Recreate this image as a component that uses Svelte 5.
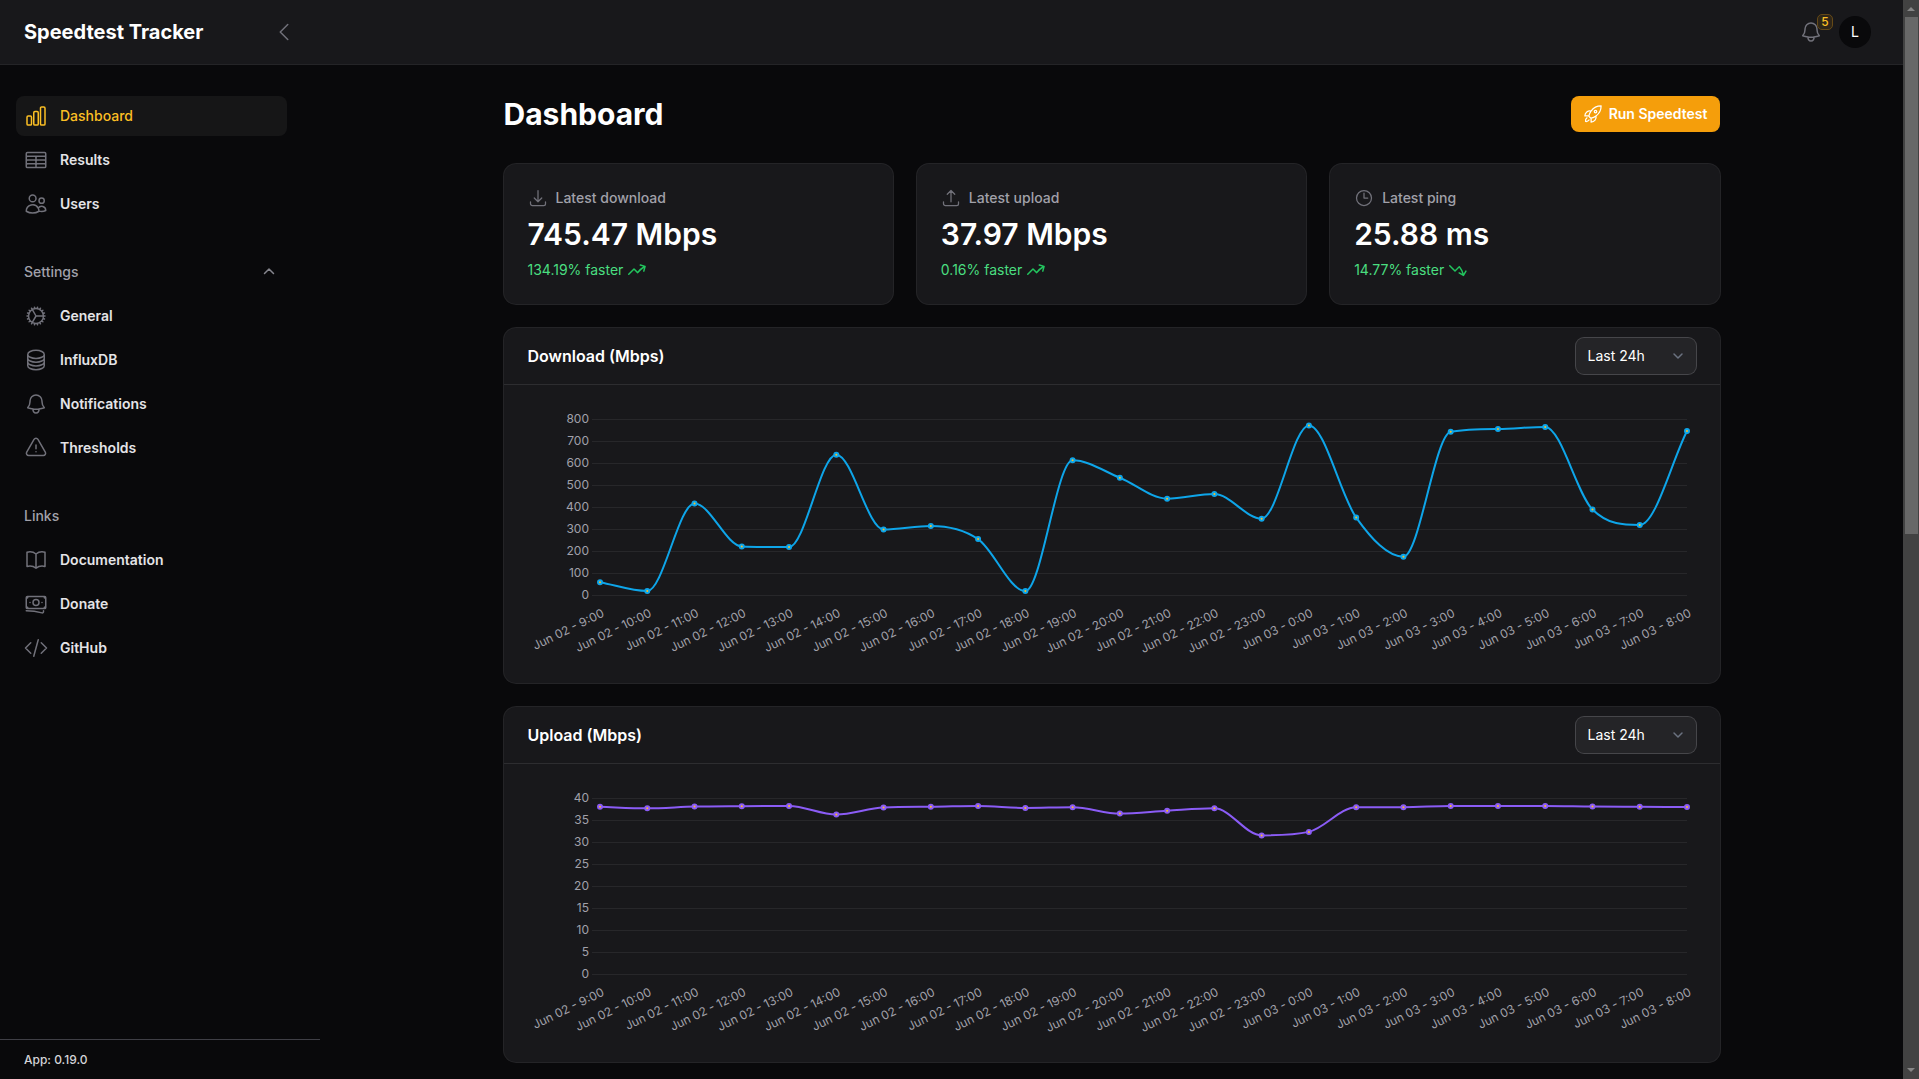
<script>
  const icons = {
    chart: 'M3 13.125C3 12.504 3.504 12 4.125 12h2.25c.621 0 1.125.504 1.125 1.125v6.75C7.5 20.496 6.996 21 6.375 21h-2.25A1.125 1.125 0 013 19.875v-6.75zM9.75 8.625c0-.621.504-1.125 1.125-1.125h2.25c.621 0 1.125.504 1.125 1.125v11.25c0 .621-.504 1.125-1.125 1.125h-2.25a1.125 1.125 0 01-1.125-1.125V8.625zM16.5 4.125c0-.621.504-1.125 1.125-1.125h2.25C20.496 3 21 3.504 21 4.125v15.75c0 .621-.504 1.125-1.125 1.125h-2.25a1.125 1.125 0 01-1.125-1.125V4.125z',
    table: 'M3.375 19.5h17.25m-17.25 0a1.125 1.125 0 01-1.125-1.125M3.375 19.5h7.5c.621 0 1.125-.504 1.125-1.125m-9.75 0V5.625m0 12.75v-1.5c0-.621.504-1.125 1.125-1.125m18.375 2.625V5.625m0 12.75c0 .621-.504 1.125-1.125 1.125m1.125-1.125v-1.5c0-.621-.504-1.125-1.125-1.125m0 3.75h-7.5A1.125 1.125 0 0112 18.375m9.75-12.75c0-.621-.504-1.125-1.125-1.125H3.375c-.621 0-1.125.504-1.125 1.125m19.5 0v1.5c0 .621-.504 1.125-1.125 1.125M2.25 5.625v1.5c0 .621.504 1.125 1.125 1.125m0 0h17.25m-17.25 0h7.5c.621 0 1.125.504 1.125 1.125M3.375 8.25c-.621 0-1.125.504-1.125 1.125v1.5c0 .621.504 1.125 1.125 1.125m17.25-3.75h-7.5c-.621 0-1.125.504-1.125 1.125m8.625-1.125c.621 0 1.125.504 1.125 1.125v1.5c0 .621-.504 1.125-1.125 1.125m-17.25 0h7.5m-7.5 0c-.621 0-1.125.504-1.125 1.125v1.5c0 .621.504 1.125 1.125 1.125M12 10.875v-1.5m0 1.5c0 .621-.504 1.125-1.125 1.125M12 10.875c0 .621.504 1.125 1.125 1.125m-2.25 0c.621 0 1.125.504 1.125 1.125M13.125 12h7.5m-7.5 0c-.621 0-1.125.504-1.125 1.125M20.625 12c.621 0 1.125.504 1.125 1.125v1.5c0 .621-.504 1.125-1.125 1.125m-17.25 0h7.5M12 14.625v-1.5m0 1.5c0 .621-.504 1.125-1.125 1.125M12 14.625c0 .621.504 1.125 1.125 1.125m-2.25 0c.621 0 1.125.504 1.125 1.125m0 1.5v-1.5m0 0c0-.621.504-1.125 1.125-1.125m0 0h7.5',
    users: 'M15 19.128a9.38 9.38 0 002.625.372 9.337 9.337 0 004.121-.952 4.125 4.125 0 00-7.533-2.493M15 19.128v-.003c0-1.113-.285-2.16-.786-3.07M15 19.128v.106A12.318 12.318 0 018.624 21c-2.331 0-4.512-.645-6.374-1.766l-.001-.109a6.375 6.375 0 0111.964-3.07M12 6.375a3.375 3.375 0 11-6.75 0 3.375 3.375 0 016.75 0zm8.25 2.25a2.625 2.625 0 11-5.25 0 2.625 2.625 0 015.25 0z',
    cog: 'M4.5 12a7.5 7.5 0 0015 0m-15 0a7.5 7.5 0 1115 0m-15 0H3m16.5 0H21m-1.5 0H12m-8.457 3.077l1.41-.513m14.095-5.13l1.41-.513M5.106 17.785l1.15-.964m11.49-9.642l1.149-.964M7.501 19.795l.75-1.3m7.5-12.99l.75-1.3m-6.063 16.658l.26-1.477m2.605-14.772l.26-1.477m0 17.726l-.26-1.477M10.698 4.614l-.26-1.477M16.5 19.794l-.75-1.299M7.5 4.205L12 12m6.894 5.785l-1.149-.964M6.256 7.178l-1.15-.964m15.352 8.864l-1.41-.513M4.954 9.435l-1.41-.514M12.002 12l-3.75 6.495',
    stack: 'M20.25 6.375c0 2.278-3.694 4.125-8.25 4.125S3.75 8.653 3.75 6.375m16.5 0c0-2.278-3.694-4.125-8.25-4.125S3.75 4.097 3.75 6.375m16.5 0v11.25c0 2.278-3.694 4.125-8.25 4.125s-8.25-1.847-8.25-4.125V6.375m16.5 0v3.75m-16.5-3.75v3.75m16.5 0v3.75C20.25 16.153 16.556 18 12 18s-8.25-1.847-8.25-4.125v-3.75m16.5 0c0 2.278-3.694 4.125-8.25 4.125s-8.25-1.847-8.25-4.125',
    bell: 'M14.857 17.082a23.848 23.848 0 005.454-1.31A8.967 8.967 0 0118 9.75v-.7V9A6 6 0 006 9v.75a8.967 8.967 0 01-2.312 6.022c1.733.64 3.56 1.085 5.455 1.31m5.714 0a24.255 24.255 0 01-5.714 0m5.714 0a3 3 0 11-5.714 0',
    warning: 'M12 9v3.75m-9.303 3.376c-.866 1.5.217 3.374 1.948 3.374h14.71c1.73 0 2.813-1.874 1.948-3.374L13.949 3.378c-.866-1.5-3.032-1.5-3.898 0L2.697 16.126zM12 15.75h.007v.008H12v-.008z',
    book: 'M12 6.042A8.967 8.967 0 006 3.75c-1.052 0-2.062.18-3 .512v14.25A8.987 8.987 0 016 18c2.305 0 4.408.867 6 2.292m0-14.25a8.966 8.966 0 016-2.292c1.052 0 2.062.18 3 .512v14.25A8.987 8.987 0 0018 18a8.967 8.967 0 00-6 2.292m0-14.25v14.25',
    banknotes: 'M2.25 18.75a60.07 60.07 0 0115.797 2.101c.727.198 1.453-.342 1.453-1.096V18.75M3.75 4.5v.75A.75.75 0 013 6h-.75m0 0v-.375c0-.621.504-1.125 1.125-1.125H20.25M2.25 6v9m18-10.5v.75c0 .414.336.75.75.75h.75m-1.5-1.5h.375c.621 0 1.125.504 1.125 1.125v9.75c0 .621-.504 1.125-1.125 1.125h-.375m1.5-1.5H21a.75.75 0 00-.75.75v.75m0 0H3.75m0 0h-.375a1.125 1.125 0 01-1.125-1.125V15m1.5 1.5v-.75A.75.75 0 003 15h-.75M15 10.5a3 3 0 11-6 0 3 3 0 016 0zm3 0h.008v.008H18V10.5zm-12 0h.008v.008H6V10.5z',
    code: 'M17.25 6.75L22.5 12l-5.25 5.25m-10.5 0L1.5 12l5.25-5.25m7.5-3l-4.5 16.5',
    rocket: 'M15.59 14.37a6 6 0 01-5.84 7.38v-4.8m5.84-2.58a14.98 14.98 0 006.16-12.12A14.98 14.98 0 009.631 8.41m5.96 5.96a14.926 14.926 0 01-5.841 2.58m-.119-8.54a6 6 0 00-7.381 5.84h4.8m2.581-5.84a14.927 14.927 0 00-2.58 5.84m2.699 2.7c-.103.021-.207.041-.311.06a15.09 15.09 0 01-2.448-2.448 14.9 14.9 0 01.06-.312m-2.24 2.39a4.493 4.493 0 00-1.757 4.306 4.493 4.493 0 004.306-1.758M16.5 9a1.5 1.5 0 11-3 0 1.5 1.5 0 013 0z',
    download: 'M3 16.5v2.25A2.25 2.25 0 005.25 21h13.5A2.25 2.25 0 0021 18.75V16.5M16.5 12L12 16.5m0 0L7.5 12m4.5 4.5V3',
    upload: 'M3 16.5v2.25A2.25 2.25 0 005.25 21h13.5A2.25 2.25 0 0021 18.75V16.5m-13.5-9L12 3m0 0l4.5 4.5M12 3v13.5',
    clock: 'M12 6v6h4.5m4.5 0a9 9 0 11-18 0 9 9 0 0118 0z',
    left: 'M15.75 19.5L8.25 12l7.5-7.5',
  };
  const trend = {
    up: 'M12.577 4.878a.75.75 0 01.919-.53l4.78 1.281a.75.75 0 01.531.919l-1.281 4.78a.75.75 0 01-1.449-.387l.81-3.022a19.407 19.407 0 00-5.594 5.203.75.75 0 01-1.139.093L7 10.06l-4.72 4.72a.75.75 0 01-1.06-1.061l5.25-5.25a.75.75 0 011.06 0l3.074 3.073a20.923 20.923 0 015.545-4.931l-3.042-.815a.75.75 0 01-.53-.919z',
    down: 'M1.22 5.222a.75.75 0 011.06 0L7 9.942l3.768-3.769a.75.75 0 011.113.058 20.908 20.908 0 013.813 7.254l1.574-2.727a.75.75 0 011.3.75l-2.475 4.286a.75.75 0 01-1.025.275l-4.287-2.475a.75.75 0 01.75-1.3l2.71 1.565a19.422 19.422 0 00-3.013-6.024L7.53 11.533a.75.75 0 01-1.06 0l-5.25-5.25a.75.75 0 010-1.06z',
  };

  const groups = [
    { items: [
      { text: 'Dashboard', icon: 'chart', active: true },
      { text: 'Results', icon: 'table' },
      { text: 'Users', icon: 'users' },
    ] },
    { title: 'Settings', collapsible: true, items: [
      { text: 'General', icon: 'cog' },
      { text: 'InfluxDB', icon: 'stack' },
      { text: 'Notifications', icon: 'bell' },
      { text: 'Thresholds', icon: 'warning' },
    ] },
    { title: 'Links', items: [
      { text: 'Documentation', icon: 'book' },
      { text: 'Donate', icon: 'banknotes' },
      { text: 'GitHub', icon: 'code' },
    ] },
  ];

  const stats = [
    { label: 'Latest download', icon: 'download', value: '745.47 Mbps', change: '134.19% faster', trend: 'up' },
    { label: 'Latest upload', icon: 'upload', value: '37.97 Mbps', change: '0.16% faster', trend: 'up' },
    { label: 'Latest ping', icon: 'clock', value: '25.88 ms', change: '14.77% faster', trend: 'down' },
  ];

  const hours = Array.from({ length: 24 }, (_, i) => {
    const h = 9 + i;
    return h < 24 ? `Jun 02 - ${h}:00` : `Jun 03 - ${h - 24}:00`;
  });

  const charts = [
    {
      id: 'download', title: 'Download (Mbps)', max: 800, step: 100, color: '#0ea5e9',
      data: [58, 18, 416, 221, 218, 638, 298, 314, 254, 18, 612, 533, 438, 459, 347, 771, 352, 174, 742, 755, 764, 389, 318, 745.47],
    },
    {
      id: 'upload', title: 'Upload (Mbps)', max: 40, step: 5, color: '#8b5cf6',
      data: [38, 37.65, 38.05, 38.15, 38.2, 36.25, 37.85, 38, 38.2, 37.75, 37.9, 36.45, 37.1, 37.65, 31.5, 32.3, 37.9, 37.9, 38.2, 38.2, 38.2, 38.05, 38, 37.97],
    },
  ];

  let chartWidth = $state(1168);
  const plot = { left: 72, right: 9, top: 10, height: 176 };

  function xAt(i, width) {
    return plot.left + (i * (width - plot.left - plot.right)) / (hours.length - 1);
  }
  function yAt(v, max) {
    return plot.top + plot.height * (1 - v / max);
  }
  function ticks(chart) {
    return Array.from({ length: chart.max / chart.step + 1 }, (_, i) => i * chart.step);
  }

  // Monotone cubic interpolation: tangents vanish at local extremes.
  function curve(chart, width) {
    const xs = chart.data.map((_, i) => xAt(i, width));
    const ys = chart.data.map((v) => yAt(v, chart.max));
    const n = xs.length;
    const d = [];
    for (let i = 0; i < n - 1; i++) d.push((ys[i + 1] - ys[i]) / (xs[i + 1] - xs[i]));
    const m = xs.map((_, i) => {
      if (i === 0) return d[0];
      if (i === n - 1) return d[n - 2];
      return d[i - 1] * d[i] <= 0 ? 0 : (d[i - 1] + d[i]) / 2;
    });
    for (let i = 0; i < n - 1; i++) {
      if (d[i] === 0) { m[i] = m[i + 1] = 0; continue; }
      const a = m[i] / d[i];
      const b = m[i + 1] / d[i];
      const s = a * a + b * b;
      if (s > 9) {
        const t = 3 / Math.sqrt(s);
        m[i] = t * a * d[i];
        m[i + 1] = t * b * d[i];
      }
    }
    let path = `M${xs[0]} ${ys[0]}`;
    for (let i = 0; i < n - 1; i++) {
      const h = (xs[i + 1] - xs[i]) / 3;
      path += `C${xs[i] + h} ${ys[i] + m[i] * h} ${xs[i + 1] - h} ${ys[i + 1] - m[i + 1] * h} ${xs[i + 1]} ${ys[i + 1]}`;
    }
    return path;
  }
</script>

{#snippet outline(name)}
  <svg class="icon" viewBox="0 0 24 24" aria-hidden="true"><path d={icons[name]} /></svg>
{/snippet}

<div class="shell">
  <div class="page">
    <header class="topbar">
      <div class="brand">
        <a class="brand-name" href="#dashboard">Speedtest Tracker</a>
        <button class="plain" type="button" aria-label="Collapse sidebar">{@render outline('left')}</button>
      </div>
      <div class="account">
        <button class="plain bell" type="button" aria-label="Notifications, 5 unread">
          {@render outline('bell')}
          <span class="badge">5</span>
        </button>
        <button class="avatar" type="button" aria-label="User menu">L</button>
      </div>
    </header>

    <div class="body">
      <aside class="sidebar">
        <nav class="nav" aria-label="Main">
          {#each groups as group}
            <div class="group">
              {#if group.collapsible}
                <button class="group-title" type="button" aria-expanded="true">
                  <span>{group.title}</span>
                  <svg class="small-icon muted" viewBox="0 0 20 20" aria-hidden="true"><path d="M5.5 11.5L10 7l4.5 4.5" /></svg>
                </button>
              {:else if group.title}
                <h2 class="group-title">{group.title}</h2>
              {/if}
              {#each group.items as item}
                <a class="item" class:active={item.active} href={`#${item.text.toLowerCase()}`} aria-current={item.active ? 'page' : undefined}>
                  {@render outline(item.icon)}
                  <span>{item.text}</span>
                </a>
              {/each}
            </div>
          {/each}
        </nav>
        <footer class="version">App: 0.19.0</footer>
      </aside>

      <main class="main">
        <div class="content">
          <div class="heading">
            <h1>Dashboard</h1>
            <button class="run" type="button">{@render outline('rocket')}<span>Run Speedtest</span></button>
          </div>

          <div class="widgets">
            <div class="stats">
              {#each stats as stat}
                <section class="card stat">
                  <div class="stat-label">{@render outline(stat.icon)}<span>{stat.label}</span></div>
                  <div class="stat-value">{stat.value}</div>
                  <div class="stat-change">
                    <span>{stat.change}</span>
                    <svg class="trend" viewBox="0 0 20 20" aria-hidden="true"><path d={trend[stat.trend]} /></svg>
                  </div>
                </section>
              {/each}
            </div>

            {#each charts as chart}
              <section class="card">
                <div class="card-head">
                  <h3>{chart.title}</h3>
                  <div class="select">
                    <select aria-label={`${chart.title} period`}>
                      <option>Last 24h</option>
                      <option>Last week</option>
                      <option>Last month</option>
                    </select>
                    <svg class="small-icon" viewBox="0 0 20 20" aria-hidden="true"><path d="M6 8l4 4 4-4" /></svg>
                  </div>
                </div>
                <div class="card-body">
                  <div class="chart" bind:clientWidth={chartWidth}>
                    <svg width={chartWidth} height="250" role="img" aria-label={chart.title}>
                      {#each ticks(chart) as tick}
                        <line class="grid" x1={plot.left - 8} x2={chartWidth - plot.right} y1={yAt(tick, chart.max)} y2={yAt(tick, chart.max)} />
                        <text class="tick" x={plot.left - 11} y={yAt(tick, chart.max) + 4} text-anchor="end">{tick}</text>
                      {/each}
                      {#each hours as hour, i}
                        <text class="tick" text-anchor="end" transform={`translate(${xAt(i, chartWidth) + 5} 207) rotate(-26)`}>{hour}</text>
                      {/each}
                      <path class="line" d={curve(chart, chartWidth)} stroke={chart.color} />
                      {#each chart.data as value, i}
                        <circle class="point" cx={xAt(i, chartWidth)} cy={yAt(value, chart.max)} r="2" stroke={chart.color} />
                      {/each}
                    </svg>
                  </div>
                </div>
              </section>
            {/each}
          </div>
        </div>
      </main>
    </div>
  </div>

  <div class="scrollbar" aria-hidden="true">
    <svg viewBox="0 0 16 17"><path d="M4 11l4-4 4 4z" /></svg>
    <div class="track"><div class="thumb"></div></div>
    <svg viewBox="0 0 16 17"><path d="M4 6l4 4 4-4z" /></svg>
  </div>
</div>

<style>
  :global(body) {
    background: #09090b;
  }
  .shell {
    display: flex;
    height: 100vh;
    font-family: Inter, "Liberation Sans", sans-serif;
    font-size: 14px;
    line-height: 20px;
    color: #fff;
    color-scheme: dark;
  }
  .shell *,
  .shell {
    box-sizing: border-box;
  }
  h1, h2, h3 {
    margin: 0;
  }
  button {
    font: inherit;
    color: inherit;
    border: 0;
    padding: 0;
    background: none;
    cursor: pointer;
  }
  a {
    color: inherit;
    text-decoration: none;
  }
  .page {
    flex: 1;
    min-width: 0;
    display: flex;
    flex-direction: column;
  }
  .topbar {
    height: 65px;
    flex: none;
    display: flex;
    justify-content: space-between;
    align-items: center;
    padding-right: 32px;
    background: #18181b;
    border-bottom: 1px solid #242427;
  }
  .brand {
    width: 320px;
    padding: 0 24px;
    display: flex;
    align-items: center;
    justify-content: space-between;
  }
  .brand-name {
    font-size: 20px;
    font-weight: 700;
  }
  .icon {
    display: block;
    flex: none;
    width: 24px;
    height: 24px;
    fill: none;
    stroke: currentColor;
    stroke-width: 1.5;
    stroke-linecap: round;
    stroke-linejoin: round;
  }
  .small-icon {
    display: block;
    width: 20px;
    height: 20px;
    fill: none;
    stroke: currentColor;
    stroke-width: 1.5;
    stroke-linecap: round;
    stroke-linejoin: round;
  }
  .muted {
    color: #85858d;
  }
  .plain {
    color: #71717a;
  }
  .account {
    display: flex;
    align-items: center;
    gap: 16px;
  }
  .bell {
    position: relative;
  }
  .badge {
    position: absolute;
    left: 18px;
    top: -6px;
    width: 16px;
    height: 16px;
    border: 1px solid #654917;
    border-radius: 5px;
    background: #2e2619;
    color: #fbbf24;
    font-size: 12px;
    line-height: 14px;
    font-weight: 500;
    text-align: center;
  }
  .avatar {
    width: 32px;
    height: 32px;
    border-radius: 50%;
    background: #09090b;
    text-align: center;
  }
  .body {
    flex: 1;
    min-height: 0;
    display: flex;
  }
  .sidebar {
    width: 320px;
    flex: none;
    display: flex;
    flex-direction: column;
  }
  .nav {
    flex: 1;
    min-height: 0;
    overflow: hidden;
    display: flex;
    flex-direction: column;
    gap: 28px;
    padding: 31px 33px 31px 16px;
  }
  .group {
    display: flex;
    flex-direction: column;
    gap: 4px;
  }
  .group-title {
    display: flex;
    align-items: center;
    justify-content: space-between;
    padding: 10px 8px;
    font-size: 14px;
    line-height: 20px;
    font-weight: 500;
    color: #a1a1aa;
  }
  .item {
    display: flex;
    align-items: center;
    gap: 12px;
    padding: 8px;
    border-radius: 8px;
    font-weight: 600;
    color: #e4e4e7;
  }
  .item .icon {
    color: #71717a;
  }
  .active {
    background: #161617;
    font-weight: 500;
  }
  .active,
  .active .icon {
    color: #fbbf24;
  }
  .version {
    border-top: 1px solid #3f3f46;
    padding: 12px 24px 11px;
    font-size: 12px;
    line-height: 16px;
    font-weight: 500;
    color: #d4d4d8;
  }
  .main {
    flex: 1;
    min-width: 0;
    overflow-y: auto;
    scrollbar-width: none;
  }
  .content {
    max-width: 1280px;
    margin: 0 auto;
    padding: 31px 32px 32px;
    display: flex;
    flex-direction: column;
    gap: 32px;
  }
  .heading {
    display: flex;
    justify-content: space-between;
    align-items: center;
  }
  h1 {
    font-size: 30px;
    line-height: 36px;
    font-weight: 700;
  }
  .run {
    display: flex;
    align-items: center;
    gap: 6px;
    padding: 8px 12px;
    border-radius: 8px;
    background: #f59e0b;
    font-weight: 600;
  }
  .run .icon,
  .stat-label .icon {
    width: 20px;
    height: 20px;
  }
  .widgets {
    display: flex;
    flex-direction: column;
    gap: 24px;
  }
  .stats {
    display: grid;
    grid-template-columns: repeat(3, 1fr);
    gap: 24px;
  }
  .card {
    border-radius: 12px;
    background: #18181b;
    box-shadow: 0 0 0 1px #242427;
  }
  .stat {
    padding: 24px;
    display: flex;
    flex-direction: column;
    gap: 8px;
  }
  .stat-label {
    display: flex;
    align-items: center;
    gap: 8px;
    font-weight: 500;
    color: #a1a1aa;
  }
  .stat-label .icon {
    color: #71717a;
  }
  .stat-value {
    font-size: 30px;
    line-height: 36px;
    font-weight: 600;
  }
  .stat-change {
    display: flex;
    align-items: center;
    gap: 4px;
    color: #4ade80;
  }
  .trend {
    width: 20px;
    height: 20px;
    fill: #22c55e;
  }
  .card-head {
    height: 56px;
    padding: 0 24px;
    display: flex;
    align-items: center;
    justify-content: space-between;
  }
  h3 {
    font-size: 16px;
    line-height: 24px;
    font-weight: 600;
  }
  .select {
    display: grid;
    align-items: center;
    border-radius: 8px;
    background: #242427;
    box-shadow: 0 0 0 1px #46464a;
  }
  .select > * {
    grid-area: 1 / 1;
  }
  .select .small-icon {
    justify-self: end;
    margin-right: 8px;
    color: #6b7280;
    pointer-events: none;
  }
  select {
    appearance: none;
    border: 0;
    margin: 0;
    min-width: 120px;
    padding: 6px 32px 6px 12px;
    background: transparent;
    color: #fff;
    font-family: inherit;
    font-size: 14px;
    line-height: 24px;
  }
  .card-body {
    border-top: 1px solid #2d2d30;
    padding: 24px;
  }
  .chart {
    height: 250px;
    overflow: hidden;
  }
  .chart svg {
    display: block;
  }
  .grid {
    stroke: #27272a;
    shape-rendering: crispEdges;
  }
  .tick {
    font-size: 12px;
    fill: #a1a1aa;
  }
  .line {
    fill: none;
    stroke-width: 2;
  }
  .point {
    fill: #fbbf24;
    stroke-width: 2;
  }
  .scrollbar {
    width: 16px;
    flex: none;
    display: flex;
    flex-direction: column;
    background: #424242;
  }
  .scrollbar svg {
    display: block;
    width: 16px;
    height: 17px;
    fill: #868686;
  }
  .track {
    flex: 1;
    padding: 0 1px 0 2px;
  }
  .thumb {
    height: 49.5%;
    background: #686868;
  }
</style>
